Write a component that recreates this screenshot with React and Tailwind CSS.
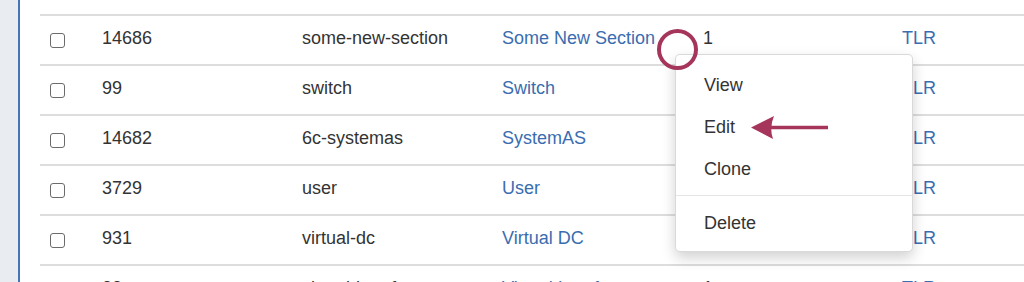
import React from "react";

const rows = [
  { id: "14686", name: "some-new-section", title: "Some New Section", count: "1" },
  { id: "99", name: "switch", title: "Switch", count: "1" },
  { id: "14682", name: "6c-systemas", title: "SystemAS", count: "1" },
  { id: "3729", name: "user", title: "User", count: "1" },
  { id: "931", name: "virtual-dc", title: "Virtual DC", count: "1" },
  { id: "33", name: "virtual-interface", title: "Virtual Interface", count: "1" },
];

function Checkbox() {
  return (
    <span className="block w-[15px] h-[15px] rounded-[3px] border-[1.5px] border-[#6b6b6b] bg-white" />
  );
}

export default function App() {
  return (
    <div
      className="relative flex w-full h-[282px] overflow-hidden bg-white text-[18px] text-[#333]"
      style={{ fontFamily: '"Liberation Sans", Arial, sans-serif' }}
    >
      {/* sidebar edge */}
      <div className="w-[18px] shrink-0 bg-[#e9edf1]" />
      <div className="flex-1 border-l-2 border-[#4676b4] pl-[20px] pt-[14px]">
        {rows.map((r) => (
          <div
            key={r.id}
            className="flex items-center h-[50px] border-t-2 border-[#dddddd]"
          >
            <div className="w-[62px] pl-[10px]">
              <Checkbox />
            </div>
            <div className="flex items-center pb-[4px]">
              <div className="w-[200px]">{r.id}</div>
              <div className="w-[200px]">{r.name}</div>
              <div className="w-[201px] text-[#3a6db0]">{r.title}</div>
              <div className="w-[199px]">{r.count}</div>
              <div className="text-[#3a6db0]">TLR</div>
            </div>
          </div>
        ))}
      </div>

      {/* dropdown menu */}
      <div className="absolute left-[675px] top-[54px] w-[238px] rounded-[5px] border border-[rgba(0,0,0,0.15)] bg-white shadow-[0_6px_14px_rgba(0,0,0,0.18)] pt-[10px] pb-[6px]">
        {["View", "Edit", "Clone"].map((item) => (
          <div key={item} className="flex items-center h-[42px] pl-[28px] pb-[2px]">
            {item}
          </div>
        ))}
        <div className="mt-[4px] mb-[7px] h-px bg-[#e5e5e5]" />
        <div className="flex items-center h-[42px] pl-[28px] pb-[2px]">Delete</div>
      </div>

      {/* annotation circle */}
      <div className="absolute left-[657px] top-[29px] w-[41px] h-[41px] rounded-full border-[4px] border-[#a6355c]" />

      {/* annotation arrow */}
      <svg
        className="absolute left-[748px] top-[112px]"
        width="84"
        height="32"
        viewBox="0 0 84 32"
      >
        <line x1="20" y1="15.5" x2="80" y2="15.5" stroke="#a6355c" strokeWidth="3.5" />
        <path d="M3 15.5 L26 4 Q21 15.5 25 27 Z" fill="#a6355c" />
      </svg>
    </div>
  );
}
